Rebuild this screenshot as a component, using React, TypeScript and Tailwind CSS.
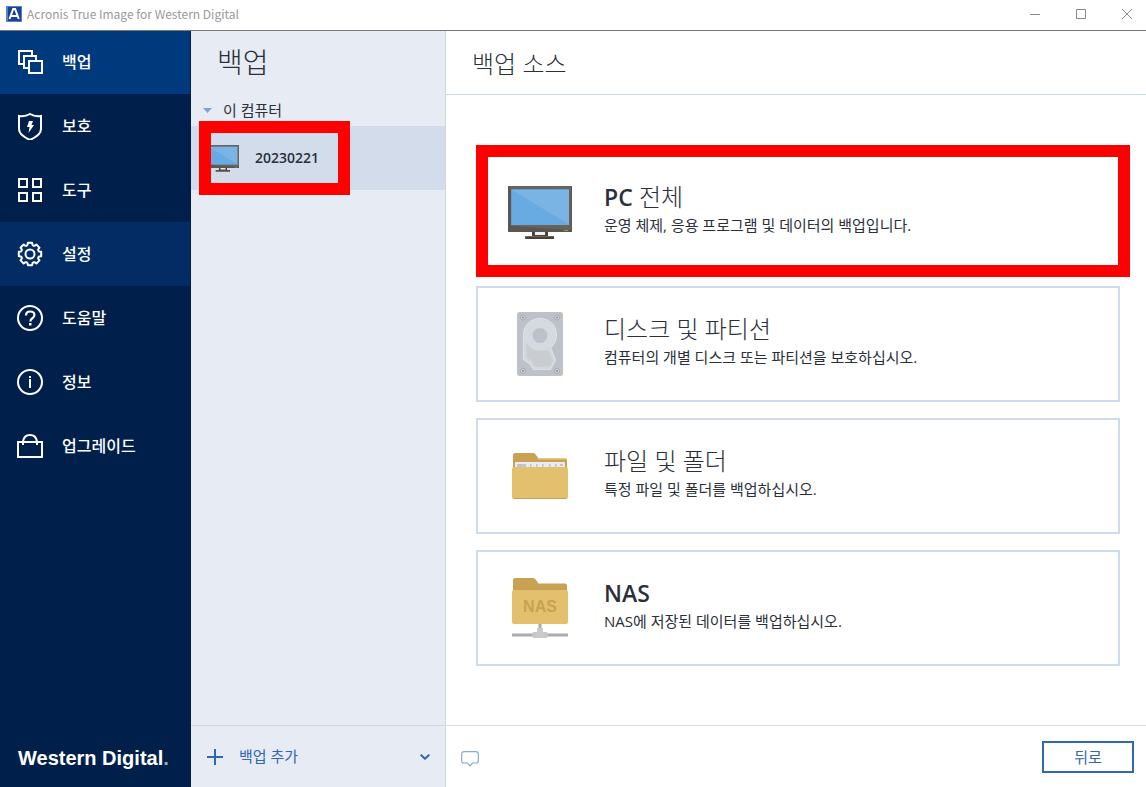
import type { ReactNode } from 'react'

function Monitor({ className }: { className: string }) {
  return (
    <svg viewBox="0 -2 64 56" className={className} aria-hidden="true">
      <path d="M24 45h16v6H24z" fill="#4b433b" />
      <path d="M27 46h10v3H27z" fill="#f1f1f1" />
      <path d="M0 0h64v46H0z" fill="#68635b" />
      <path d="M0 0v46h64v-2L3 40V3z" fill="#5b564e" />
      <path d="M3 3h60v36H3z" fill="#5aa0dc" />
      <path d="M4 4h58v35H4z" fill="#67abe2" />
      <path d="M4 4h58v35z" fill="#79b4e4" />
      <path d="M63 0h1v46h-1z" fill="#5b564e" />
      <path d="M61 3h2v36h-2z" fill="#68635b" />
      <path d="M56 44h4v1h-4z" fill="#7fa860" />
      <path d="M17 50h29v3H17z" fill="#6e665d" />
      <path d="M18 51h28v2H18z" fill="#463e38" />
    </svg>
  )
}

function Screw({ x, y }: { x: number; y: number }) {
  return (
    <g>
      <circle cx={x} cy={y} r="2.5" fill="#d6d6d6" stroke="#a3a3a3" strokeWidth="0.8" />
      <circle cx={x} cy={y} r="1" fill="#8c8c8c" />
    </g>
  )
}

function Disk() {
  return (
    <svg viewBox="0 0 46 64" className="h-16 w-[46px]" aria-hidden="true">
      <rect width="46" height="64" rx="2.5" fill="#bcc1ca" />
      <path
        d="M6.500 23a16.500 16.500 0 1 1 27 12.700l5 12.300-5 9.500H16.500l-3.500-5.500-6.500-4.500z"
        fill="#d2d6dd"
        stroke="#dce0e7"
        strokeWidth="1.200"
        strokeLinejoin="round"
      />
      <path d="M9.500 31q5 8 14 7.500h7.500l5 10-3.500 6H18l-3-5.500-5.500-3.500z" fill="#c9cdd0" />
      <circle cx="23" cy="23" r="15.500" fill="#d5d9e0" />
      <circle cx="23" cy="23.500" r="7.500" fill="#bcc1ca" />
      <Screw x={6} y={5.5} />
      <Screw x={40} y={5.5} />
      <Screw x={6} y={59} />
      <Screw x={40} y={59} />
    </svg>
  )
}

function Folder() {
  return (
    <svg viewBox="0 0 56 46" className="h-[46px] w-14" aria-hidden="true">
      <path d="M1 20V2q0-2 2-2h18q2 0 3 2l2.500 3.500H53q2 0 2 2V20z" fill="#c8a252" />
      <path d="M25.500 5h27.500q1.500 0 2 1.500H26z" fill="#e0c88f" />
      <path d="M3 9h50v10H3z" fill="#e9ebf1" />
      <path d="M5 11h9v3H5zM18 11h1.500v3H18zM24 11h1.500v3H24zM30 11h1.500v3H30zM37 11h1.500v3H37zM43 11h1.500v3H43zM48 11h3v2h-3z" fill="#c2c4ca" />
      <rect y="14" width="56" height="32" rx="2" fill="#e3c06e" />
      <path d="M1 45h54q-1 1-2 1H3q-1 0-2-1z" fill="#c8a252" />
    </svg>
  )
}

function NasFolder() {
  return (
    <svg viewBox="0 0 56 60" className="h-[60px] w-14" aria-hidden="true">
      <path d="M1 16V2q0-2 2-2h18q2 0 3 2l2.500 3.500H53q2 0 2 2V16z" fill="#c8a252" />
      <rect y="12" width="56" height="34" rx="2" fill="#e3c06e" />
      <text x="28" y="34" textAnchor="middle" fontSize="16" fontWeight="700" fontFamily="Liberation Sans, sans-serif" fill="#c8a252">
        NAS
      </text>
      <path d="M0 55.500h56v3H0z" fill="#ababab" />
      <path d="M26.500 46h3v4h-3z" fill="#a9a9a9" />
      <path d="M25 50h6v4h3q2 0 2 2v2q0 2-2 2H22q-2 0-2-2v-2q0-2 2-2h3z" fill="#c9c9c9" />
    </svg>
  )
}

function NavSvg({ children }: { children: ReactNode }) {
  return (
    <svg viewBox="0 0 28 28" className="size-7 shrink-0" fill="none" stroke="white" strokeWidth="2" aria-hidden="true">
      {children}
    </svg>
  )
}

const gear = Array.from({ length: 8 }, (_, i) => {
  const point = (r: number, deg: number) => {
    const a = ((deg + i * 45) * Math.PI) / 180
    return `${(14 + r * Math.cos(a)).toFixed(2)} ${(14 + r * Math.sin(a)).toFixed(2)}`
  }
  return `${i === 0 ? 'M' : 'L'}${point(9, -22.5)}L${point(9.3, -16)}L${point(11.4, -11)}L${point(11.4, 11)}L${point(9.3, 16)}L${point(9, 22.5)}`
}).join('') + 'Z'

const navItems = [
  {
    label: '백업',
    bg: 'bg-[#003a7d]',
    icon: (
      <NavSvg>
        <path d="M8 16H3V3h13v4M13 20H8V8h12v4M13 13h13v12H13z" />
      </NavSvg>
    ),
  },
  {
    label: '보호',
    bg: '',
    icon: (
      <NavSvg>
        <path d="M14 2Q9 5 3 4v13q0 6 11 11 11-5 11-11V4q-6 1-11-2z" />
        <path d="M13 9h4l-1.500 4H18l-5.500 8 1-6H11z" fill="white" stroke="none" />
      </NavSvg>
    ),
  },
  {
    label: '도구',
    bg: '',
    icon: (
      <NavSvg>
        <path d="M3 3h8v8H3zM17 3h8v8h-8zM3 17h8v8H3zM17 17h8v8h-8z" />
      </NavSvg>
    ),
  },
  {
    label: '설정',
    bg: 'bg-[#042c64]',
    icon: (
      <NavSvg>
        <path d={gear} strokeLinejoin="round" />
        <circle cx="14" cy="14" r="4.500" />
      </NavSvg>
    ),
  },
  {
    label: '도움말',
    bg: '',
    icon: (
      <NavSvg>
        <circle cx="14" cy="14" r="12" />
        <path d="M10 11.500q0-4 4.200-4t4.200 3.500q0 2-2 3.200t-2 3.300" strokeWidth="2.200" />
        <path d="M13 19h2.500v2.500H13z" fill="white" stroke="none" />
      </NavSvg>
    ),
  },
  {
    label: '정보',
    bg: '',
    icon: (
      <NavSvg>
        <circle cx="14" cy="14" r="12" />
        <path d="M13 11h2v9h-2zM13 8h2v2h-2z" fill="white" stroke="none" />
      </NavSvg>
    ),
  },
  {
    label: '업그레이드',
    bg: '',
    icon: (
      <NavSvg>
        <path d="M2 10h24v15H2zM7 13V9.500Q8 3 14 3t7 6.500V13" />
      </NavSvg>
    ),
  },
]

const sources = [
  { title: 'PC 전체', text: '운영 체제, 응용 프로그램 및 데이터의 백업입니다.', icon: <Monitor className="h-14 w-16" />, marked: true },
  { title: '디스크 및 파티션', text: '컴퓨터의 개별 디스크 또는 파티션을 보호하십시오.', icon: <Disk />, marked: false },
  { title: '파일 및 폴더', text: '특정 파일 및 폴더를 백업하십시오.', icon: <Folder />, marked: false },
  { title: 'NAS', text: 'NAS에 저장된 데이터를 백업하십시오.', icon: <NasFolder />, marked: false },
]

function SourceTitle({ title }: { title: string }) {
  const match = title.match(/^([A-Z]*)(.*)$/)
  return (
    <span className="block text-2xl leading-7 font-light">
      <span className="text-[23px] font-semibold">{match?.[1]}</span>
      {match?.[2]}
    </span>
  )
}

export default function App() {
  return (
    <div className="flex min-h-screen flex-col bg-white font-['Open_Sans','Noto_Sans_CJK_KR',sans-serif] text-[#2b2f3a]">
      <header className="relative z-10 flex h-[30px] shrink-0 items-center bg-white pr-[14px] pb-0.5 pl-1.5 shadow-[0_1px_0_#77777b]">
        <svg viewBox="0 0 16 16" className="size-4" aria-hidden="true">
          <path d="M0 0h16v16H0z" fill="#4a83d8" />
          <path d="M2 1h13v14H2z" fill="#1e3f93" />
          <path d="M3.500 13 7.200 3h1.900l3.700 10M5 10h6.500" fill="none" stroke="white" strokeWidth="2" />
        </svg>
        <span className="ml-[5px] text-xs leading-4 text-[#999] font-['Noto_Sans_CJK_KR',sans-serif]">Acronis True Image for Western Digital</span>
        <div className="ml-auto flex gap-9 text-[#888]">
          <button aria-label="최소화">
            <svg viewBox="0 0 10 10" className="size-2.5" fill="none" stroke="currentColor"><path d="M0 5.500h10" /></svg>
          </button>
          <button aria-label="최대화">
            <svg viewBox="0 0 10 10" className="size-2.5" fill="none" stroke="currentColor"><path d="M.5.5h9v9h-9z" /></svg>
          </button>
          <button aria-label="닫기">
            <svg viewBox="0 0 10 10" className="size-2.5" fill="none" stroke="currentColor"><path d="m0 0 10 10M10 0 0 10" /></svg>
          </button>
        </div>
      </header>

      <div className="flex flex-1">
        <nav className="flex w-[191px] shrink-0 flex-col border-r border-[#00204b] bg-[#00204b] text-white">
          {navItems.map((item) => (
            <button key={item.label} className={`flex h-16 items-center gap-[18px] pl-4 text-base font-medium ${item.bg}`}>
              {item.icon}
              {item.label}
            </button>
          ))}
          <div className="mt-auto flex h-[62px] items-center pt-1 pl-[18px] text-xl font-bold font-['Liberation_Sans',sans-serif]">
            Western Digital<span className="text-[#9aa8bd]">.</span>
          </div>
        </nav>

        <aside className="flex w-[255px] shrink-0 flex-col border-r border-[#cbd8ea] bg-[#e7ebf4]">
          <h1 className="flex h-16 items-center pl-[26px] text-[28px] font-light">백업</h1>
          <button className="flex h-8 items-center gap-[11px] pl-3 text-[15px]">
            <svg viewBox="0 0 9 5" className="h-[5px] w-[9px]" aria-hidden="true"><path d="M0 0h9L4.500 5z" fill="#81a3d1" /></svg>
            이 컴퓨터
          </button>
          <button className="relative flex h-16 items-center gap-4 bg-[#d3dcea] pl-4 text-sm font-semibold">
            <Monitor className="h-7 w-8" />
            20230221
            <span className="pointer-events-none absolute -top-[5px] left-2 h-[74px] w-[151px] border-12 border-[#ff0000]" />
          </button>
          <button className="mt-auto flex h-[62px] items-center gap-4 border-t border-[#cbd8ea] pr-[15px] pl-4 text-[15px] text-[#2f67b0]">
            <svg viewBox="0 0 16 16" className="size-4" stroke="currentColor" strokeWidth="2" aria-hidden="true"><path d="M8 0v16M0 8h16" /></svg>
            백업 추가
            <svg viewBox="0 0 10 6" className="ml-auto h-1.5 w-2.5" fill="none" stroke="currentColor" strokeWidth="2" aria-hidden="true"><path d="m.7.7 4.300 4L9.300.7" /></svg>
          </button>
        </aside>

        <main className="flex min-w-0 flex-1 flex-col">
          <h2 className="flex h-[65px] items-center border-b border-[#cbdaeb] pt-1 pl-[26px] text-2xl font-light">백업 소스</h2>
          <div className="flex flex-col gap-4 pt-[59px] pr-[26px] pb-[59px] pl-[30px]">
            {sources.map((source) => (
              <button key={source.title} className="relative flex h-[116px] items-center gap-8 border-2 border-[#cddbea] bg-white pl-[30px] text-left">
                <span className="flex w-16 shrink-0 justify-center">{source.icon}</span>
                <span className="pb-0.5">
                  <SourceTitle title={source.title} />
                  <span className="block text-[15px] leading-7">{source.text}</span>
                </span>
                {source.marked && (
                  <span className="pointer-events-none absolute -top-[11px] -right-3 -bottom-[9px] -left-0.5 border-12 border-[#ff0000]" />
                )}
              </button>
            ))}
          </div>
          <footer className="mt-auto flex h-[62px] items-center justify-between border-t border-[#d2dde9] pr-3 pl-[15px]">
            <button aria-label="의견" className="pt-1 text-[#8aa9d3]">
              <svg viewBox="0 0 18 16" className="h-4 w-[18px]" fill="none" stroke="currentColor" strokeWidth="1.200">
                <path d="M3 .7h12q2.300 0 2.300 2.300v7q0 2-2.300 2h-3.500L9 14.800 6.500 12H3Q.7 12 .7 10V3Q.7.7 3 .7z" />
              </svg>
            </button>
            <button className="h-8 w-[92px] border-2 border-[#2f67b0] text-[15px] leading-7 text-[#2f67b0]">뒤로</button>
          </footer>
        </main>
      </div>
    </div>
  )
}
